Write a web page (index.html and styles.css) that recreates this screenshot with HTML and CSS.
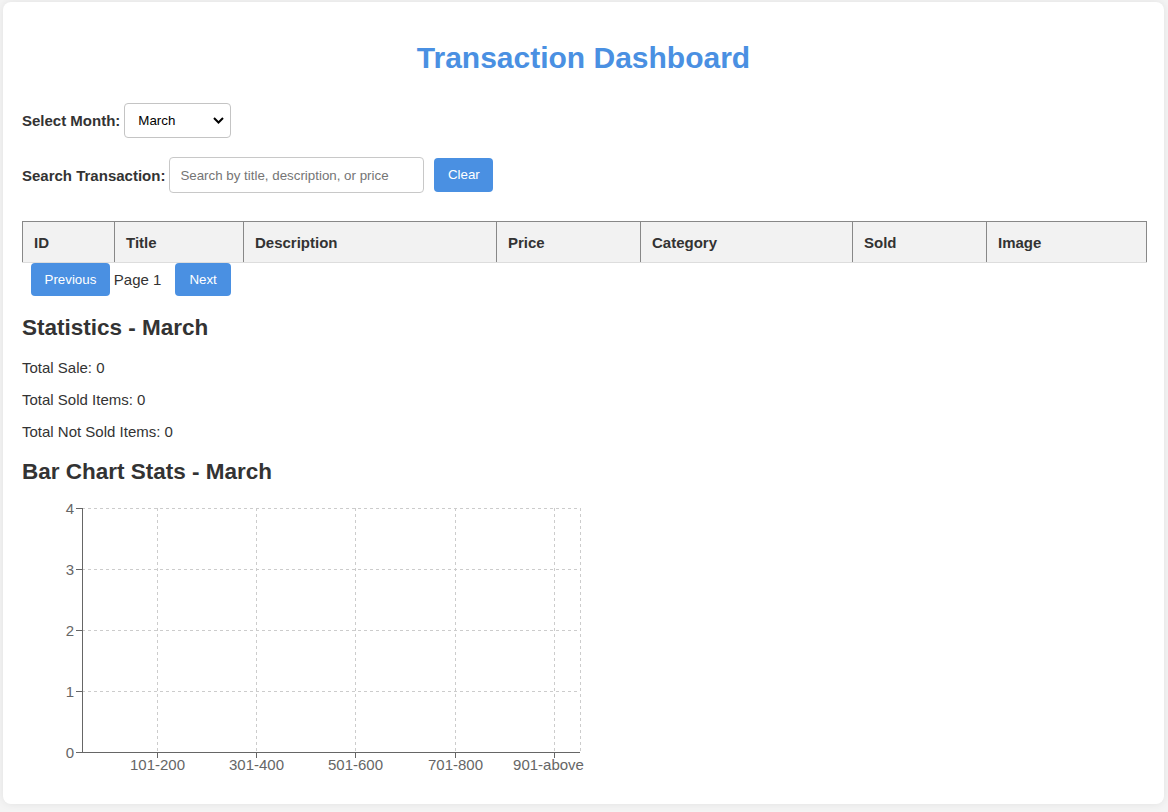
FILE: index.html
```html
<!DOCTYPE html>
<html lang="en">
<head>
<meta charset="utf-8">
<title>Transaction Dashboard</title>
<link rel="stylesheet" href="styles.css">
</head>
<body>
<div class="card">
  <h1 class="title">Transaction Dashboard</h1>

  <div class="filter-row month-row">
    <label class="filter-label" for="month">Select Month:</label>
    <span class="select-wrap">
      <select id="month" class="month-select">
        <option>January</option>
        <option>February</option>
        <option selected>March</option>
        <option>April</option>
      </select>
      <svg class="chevron" width="11" height="7" viewBox="0 0 11 7"><path d="M1 1 L5.5 5.5 L10 1" fill="none" stroke="#000" stroke-width="2"/></svg>
    </span>
  </div>

  <div class="filter-row search-row">
    <label class="filter-label" for="search">Search Transaction:</label>
    <input id="search" class="search-input" type="text" placeholder="Search by title, description, or price">
    <button class="btn btn-clear">Clear</button>
  </div>

  <table class="tx-table">
    <colgroup>
      <col class="c-id">
      <col class="c-title">
      <col class="c-desc">
      <col class="c-price">
      <col class="c-cat">
      <col class="c-sold">
      <col class="c-img">
    </colgroup>
    <thead>
      <tr>
        <th>ID</th>
        <th>Title</th>
        <th>Description</th>
        <th>Price</th>
        <th>Category</th>
        <th>Sold</th>
        <th>Image</th>
      </tr>
    </thead>
    <tbody></tbody>
  </table>

  <div class="pagination">
    <button class="btn btn-prev">Previous</button>
    <span class="page-num">Page 1</span>
    <button class="btn btn-next">Next</button>
  </div>

  <h2 class="section-title">Statistics - March</h2>
  <p class="stat">Total Sale: 0</p>
  <p class="stat">Total Sold Items: 0</p>
  <p class="stat">Total Not Sold Items: 0</p>

  <h2 class="section-title">Bar Chart Stats - March</h2>
  <div class="chart-wrap">
  <svg class="chart" width="600" height="279" viewBox="0 0 600 279">
    <g class="grid" stroke="#ccc" stroke-dasharray="3 3" fill="none">
      <line x1="60" y1="4.5" x2="558" y2="4.5"/>
      <line x1="60" y1="65.5" x2="558" y2="65.5"/>
      <line x1="60" y1="126.5" x2="558" y2="126.5"/>
      <line x1="60" y1="187.5" x2="558" y2="187.5"/>
      <line x1="135.5" y1="4" x2="135.5" y2="248"/>
      <line x1="234.5" y1="4" x2="234.5" y2="248"/>
      <line x1="333.5" y1="4" x2="333.5" y2="248"/>
      <line x1="433.5" y1="4" x2="433.5" y2="248"/>
      <line x1="532.5" y1="4" x2="532.5" y2="248"/>
      <line x1="558.5" y1="4" x2="558.5" y2="248"/>
    </g>
    <g class="axis" stroke="#666" fill="none">
      <line x1="60.5" y1="4" x2="60.5" y2="248.5"/>
      <line x1="60" y1="248.5" x2="558" y2="248.5"/>
      <line x1="54" y1="4.5" x2="60" y2="4.5"/>
      <line x1="54" y1="65.5" x2="60" y2="65.5"/>
      <line x1="54" y1="126.5" x2="60" y2="126.5"/>
      <line x1="54" y1="187.5" x2="60" y2="187.5"/>
      <line x1="54" y1="248.5" x2="60" y2="248.5"/>
      <line x1="135.5" y1="248" x2="135.5" y2="254"/>
      <line x1="234.5" y1="248" x2="234.5" y2="254"/>
      <line x1="333.5" y1="248" x2="333.5" y2="254"/>
      <line x1="433.5" y1="248" x2="433.5" y2="254"/>
      <line x1="532.5" y1="248" x2="532.5" y2="254"/>
    </g>
    <g class="tick-y">
      <text x="52" y="9.5">4</text>
      <text x="52" y="70.5">3</text>
      <text x="52" y="131.5">2</text>
      <text x="52" y="192.5">1</text>
      <text x="52" y="253.5">0</text>
    </g>
    <g class="tick-x">
      <text x="135.5" y="266">101-200</text>
      <text x="234.5" y="266">301-400</text>
      <text x="333.5" y="266">501-600</text>
      <text x="433.5" y="266">701-800</text>
      <text x="526.5" y="266">901-above</text>
    </g>
  </svg>
  </div>
</div>
</body>
</html>
```

FILE: styles.css
```css
html, body {
  margin: 0;
  padding: 0;
}

body {
  background: #f4f4f4;
  font-family: "Liberation Sans", Arial, sans-serif;
  font-size: 15px;
  color: #333;
  padding: 2px 4px 9px 3px;
}

.card {
  background: #fff;
  border-radius: 8px;
  box-shadow: 0 0 8px rgba(0, 0, 0, 0.08);
  padding: 20px 19px 21px 19px;
}

.title {
  font-size: 30px;
  font-weight: bold;
  color: #4a90e2;
  text-align: center;
  margin: 19px 0 28px;
}

.filter-row {
  display: flex;
  align-items: center;
}

.month-row {
  margin-bottom: 19px;
}

.search-row {
  margin-bottom: 28px;
}

.filter-label {
  font-weight: bold;
  font-size: 15px;
  color: #333;
  margin-right: 4px;
}

.select-wrap {
  position: relative;
  display: inline-block;
}

.month-select {
  appearance: none;
  -webkit-appearance: none;
  width: 107px;
  height: 35px;
  box-sizing: border-box;
  border: 1px solid #c4c4c4;
  border-radius: 4px;
  background: #fff;
  padding: 0 0 0 13px;
  font-family: "Liberation Sans", Arial, sans-serif;
  font-size: 13.33px;
  color: #000;
  display: block;
}

.chevron {
  position: absolute;
  right: 7px;
  top: 14px;
  pointer-events: none;
}

.search-input {
  width: 255px;
  height: 36px;
  box-sizing: border-box;
  border: 1px solid #c8c8c8;
  border-radius: 4px;
  padding: 0 10px;
  font-family: "Liberation Sans", Arial, sans-serif;
  font-size: 13.33px;
  color: #333;
}

.search-input::placeholder {
  color: #757575;
}

.btn {
  background: #4a90e2;
  color: #fff;
  border: none;
  border-radius: 4px;
  font-family: "Liberation Sans", Arial, sans-serif;
  font-size: 13.33px;
  padding: 9px 13.5px;
  line-height: 15px;
  cursor: pointer;
}

.btn-clear {
  margin-left: 10px;
  padding: 9px 13.5px 10px;
}

.btn-next {
  margin-left: 14px;
  padding: 9px 14px;
}

.tx-table {
  width: 1124px;
  border-collapse: collapse;
  table-layout: fixed;
}

.tx-table th {
  background: #f2f2f2;
  text-align: left;
  font-weight: bold;
  font-size: 15px;
  color: #333;
  height: 40px;
  padding: 0 11px;
  border-top: 1px solid #888;
  border-left: 1px solid #888;
  border-right: 1px solid #888;
  border-bottom: 1px solid #ddd;
}

.c-id { width: 92px; }
.c-title { width: 129px; }
.c-desc { width: 253px; }
.c-price { width: 144px; }
.c-cat { width: 212px; }
.c-sold { width: 134px; }
.c-img { width: 160px; }

.pagination {
  display: flex;
  align-items: center;
  padding-left: 9px;
}

.page-num {
  margin-left: 4px;
  font-size: 15px;
  color: #333;
}

.section-title {
  font-size: 22.5px;
  font-weight: bold;
  color: #333;
  margin: 18.5px 0;
}

.stat {
  margin: 15px 0;
  font-size: 15px;
}

.chart-wrap {
  padding-top: 1px;
}

.chart {
  display: block;
  overflow: visible;
}

.chart text {
  font-family: "Liberation Sans", Arial, sans-serif;
  font-size: 15px;
  fill: #666;
}

.tick-y text {
  text-anchor: end;
}

.tick-x text {
  text-anchor: middle;
}
```
